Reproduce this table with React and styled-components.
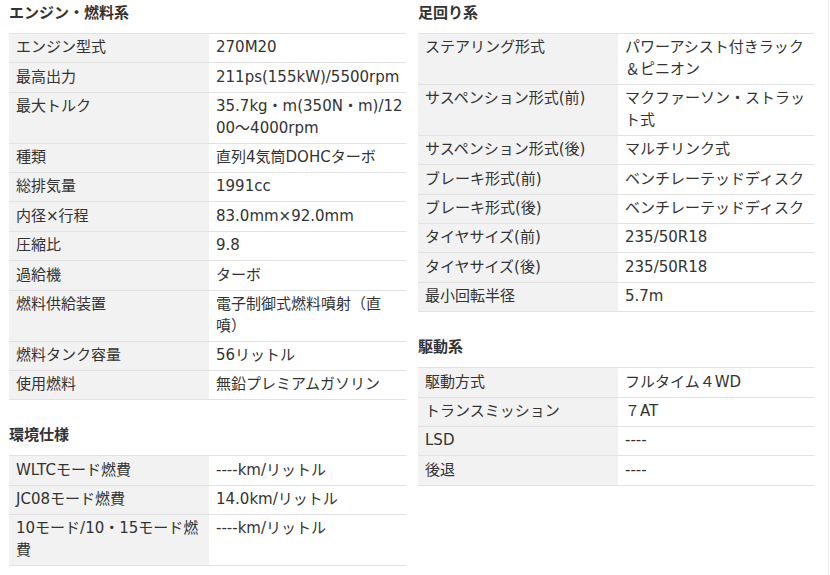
import React from 'react';
import styled, { createGlobalStyle } from 'styled-components';

const GlobalStyle = createGlobalStyle`
  html, body {
    margin: 0;
    padding: 0;
    background: #ffffff;
  }
  body {
    font-family: 'DejaVu Sans', 'Noto Sans CJK JP', sans-serif;
    color: #333333;
  }
`;

const Page = styled.div`
  width: 829px;
  min-height: 575px;
  box-sizing: border-box;
  padding: 3px 14px 0 9px;
  border-right: 1px solid #e8e8e8;
  display: grid;
  grid-template-columns: 397px 396px;
  column-gap: 12px;
  align-items: start;
`;

const Column = styled.div`
  display: flex;
  flex-direction: column;
  gap: 25px;
`;

const Section = styled.section`
  display: flex;
  flex-direction: column;
`;

const Heading = styled.h3`
  margin: 0 0 10px;
  font-family: 'DejaVu Sans', 'Noto Sans CJK JP', sans-serif;
  font-size: 15px;
  line-height: 20px;
  font-weight: 700;
  color: #333333;
`;

const Table = styled.table`
  width: 100%;
  border-collapse: collapse;
  table-layout: fixed;
  border-top: 1px solid #e2e2e2;
`;

const Row = styled.tr`
  border-bottom: 1px solid #e2e2e2;
`;

const Cell = styled.td`
  padding: 3.4px 3px 3.4px 7px;
  font-size: 15px;
  line-height: 21.6px;
  vertical-align: top;
  text-align: left;
  word-break: break-all;
  color: #333333;
`;

const LabelCell = styled(Cell).attrs({ as: 'th' })`
  width: ${(p) => p.$w - 10}px;
  font-weight: 400;
  background: #f2f2f2;
`;

const SpecTable = ({ title, rows }) => (
  <Section>
    <Heading>{title}</Heading>
    <Table>
      <tbody>
        {rows.map(([label, value]) => (
          <Row key={label}>
            <LabelCell $w={200}>{label}</LabelCell>
            <Cell>{value}</Cell>
          </Row>
        ))}
      </tbody>
    </Table>
  </Section>
);

const engine = [
  ['エンジン型式', '270M20'],
  ['最高出力', '211ps(155kW)/5500rpm'],
  ['最大トルク', '35.7kg・m(350N・m)/1200～4000rpm'],
  ['種類', '直列4気筒DOHCターボ'],
  ['総排気量', '1991cc'],
  ['内径×行程', '83.0mm×92.0mm'],
  ['圧縮比', '9.8'],
  ['過給機', 'ターボ'],
  ['燃料供給装置', '電子制御式燃料噴射（直噴）'],
  ['燃料タンク容量', '56リットル'],
  ['使用燃料', '無鉛プレミアムガソリン'],
];

const eco = [
  ['WLTCモード燃費', '----km/リットル'],
  ['JC08モード燃費', '14.0km/リットル'],
  ['10モード/10・15モード燃費', '----km/リットル'],
];

const chassis = [
  ['ステアリング形式', 'パワーアシスト付きラック＆ピニオン'],
  ['サスペンション形式(前)', 'マクファーソン・ストラット式'],
  ['サスペンション形式(後)', 'マルチリンク式'],
  ['ブレーキ形式(前)', 'ベンチレーテッドディスク'],
  ['ブレーキ形式(後)', 'ベンチレーテッドディスク'],
  ['タイヤサイズ(前)', '235/50R18'],
  ['タイヤサイズ(後)', '235/50R18'],
  ['最小回転半径', '5.7m'],
];

const drive = [
  ['駆動方式', 'フルタイム４WD'],
  ['トランスミッション', '７AT'],
  ['LSD', '----'],
  ['後退', '----'],
];

export default function App() {
  return (
    <>
      <GlobalStyle />
      <Page>
        <Column>
          <SpecTable title="エンジン・燃料系" rows={engine} />
          <SpecTable title="環境仕様" rows={eco} />
        </Column>
        <Column>
          <SpecTable title="足回り系" rows={chassis} />
          <SpecTable title="駆動系" rows={drive} />
        </Column>
      </Page>
    </>
  );
}
